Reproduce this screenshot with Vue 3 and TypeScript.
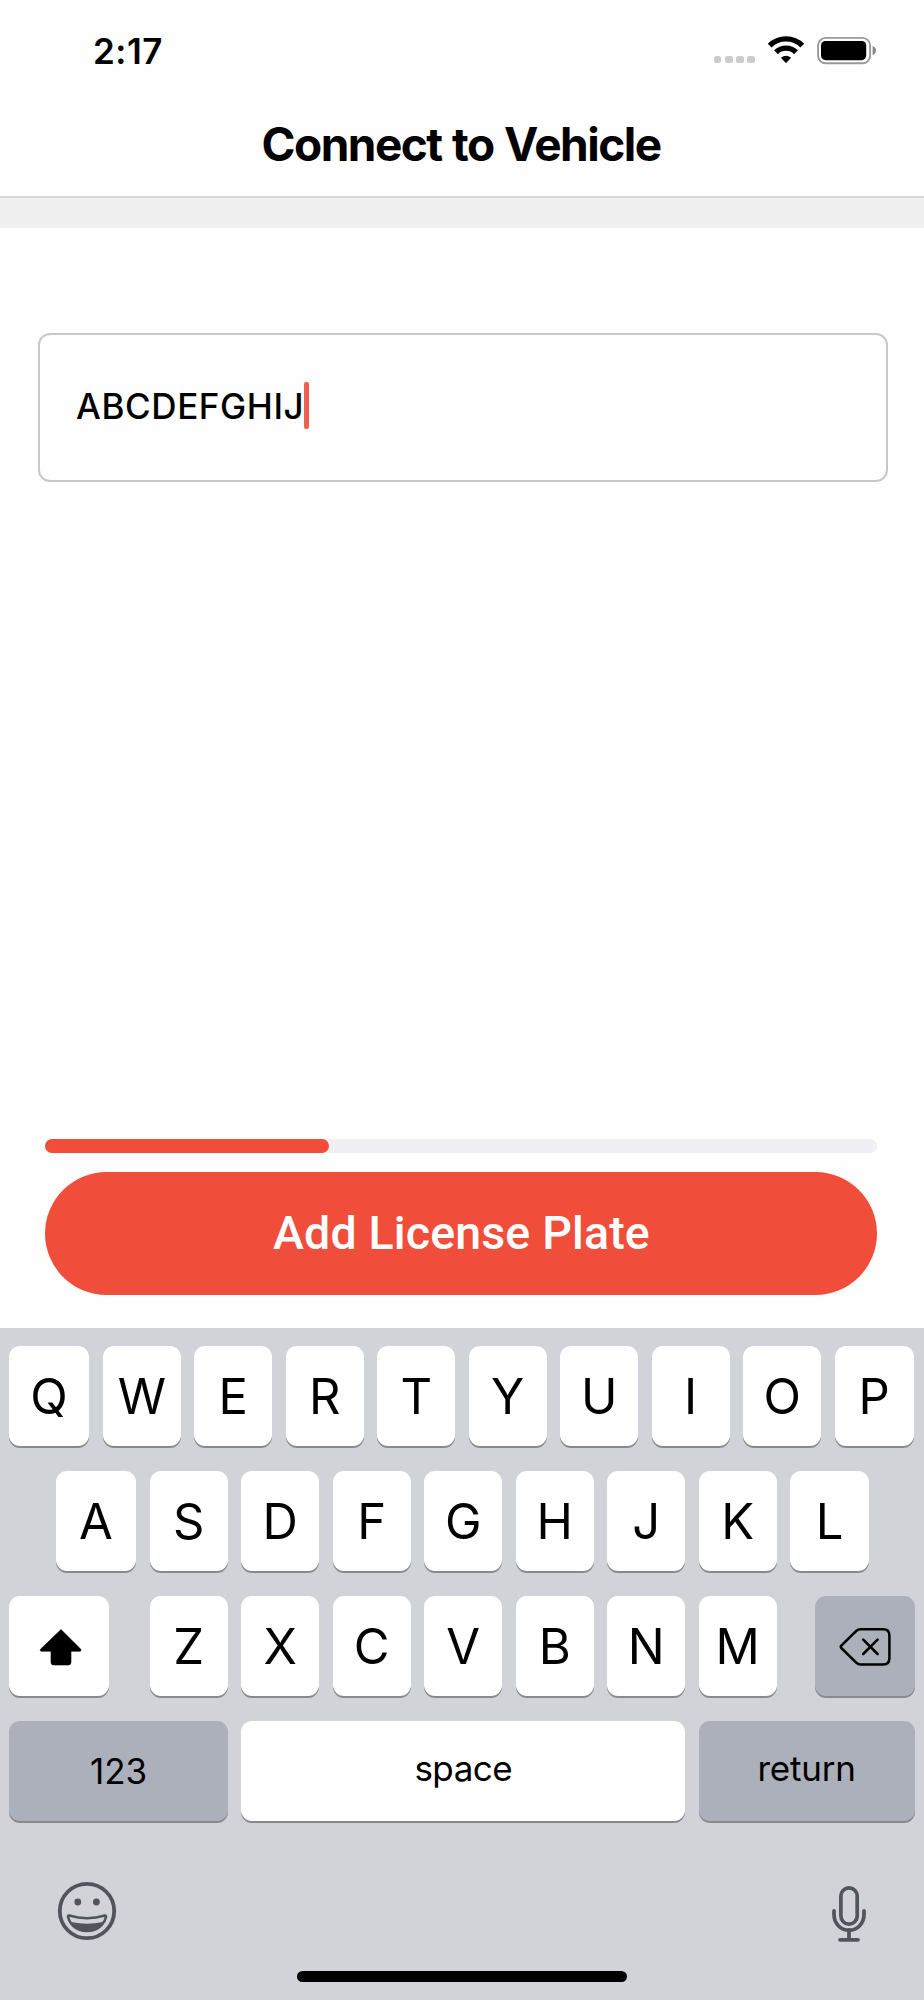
<script setup lang="ts">
import { ref } from 'vue'

const plate = ref<string>('ABCDEFGHIJ')
const progress = ref<number>(34.1)
const topRow: string[] = [...'QWERTYUIOP']
const homeRow: string[] = [...'ASDFGHJKL']
const bottomRow: string[] = [...'ZXCVBNM']
</script>

<template>
  <div class="screen">
    <header class="header">
      <div class="status">
        <span class="time">2:17</span>
        <div class="indicators">
          <div class="signal"><i v-for="n in 4" :key="n"></i></div>
          <svg class="wifi" width="38" height="28" viewBox="0 0 38 28">
            <path d="M2.7 9.6A23 23 0 0 1 35.3 9.6" fill="none" stroke="#000" stroke-width="5.4" />
            <path d="M9 16.2A14.4 14.4 0 0 1 29 16.2" fill="none" stroke="#000" stroke-width="5.4" />
            <path d="M13.9 21.7Q19 17.6 24.1 21.7L19.7 26.6Q19 27.3 18.3 26.6Z" fill="#000" />
          </svg>
          <svg class="battery" width="62" height="29" viewBox="0 0 62 29">
            <rect x="2.1" y="1.9" width="52" height="25.4" rx="7.6" fill="none" stroke="#999" stroke-width="1.9" />
            <rect x="5" y="5" width="45.2" height="19.2" rx="4.6" fill="#000" />
            <path d="M56.6 10Q60 11.4 60 14.6Q60 17.8 56.6 19.2Z" fill="#888" />
          </svg>
        </div>
      </div>
      <h1 class="title">Connect to Vehicle</h1>
    </header>
    <div class="band"></div>

    <main class="content">
      <div class="field">
        <span class="value">{{ plate }}</span><span class="caret"></span>
      </div>
      <div class="actions">
        <div class="track"><div class="fill" :style="{ width: progress + '%' }"></div></div>
        <button class="submit" type="button"><span>Add License Plate</span></button>
      </div>
    </main>

    <section class="keyboard">
      <div class="row">
        <div v-for="k in topRow" :key="k" class="key letter">{{ k }}</div>
      </div>
      <div class="row home-row">
        <div v-for="k in homeRow" :key="k" class="key letter">{{ k }}</div>
      </div>
      <div class="row">
        <div class="key shift">
          <svg width="44" height="38" viewBox="0 0 44 38">
            <path d="M22 1.6L41.8 21.2Q42.6 22.8 41.2 23.2H32V34.2Q32 37 29.2 37H14.8Q12 37 12 34.2V23.2H2.2Q.6 22.8 1.5 21.2Z" fill="#000" stroke="#000" stroke-width=".6" stroke-linejoin="round" />
          </svg>
        </div>
        <div class="letters">
          <div v-for="k in bottomRow" :key="k" class="key letter">{{ k }}</div>
        </div>
        <div class="key gray delete">
          <svg width="52" height="40" viewBox="0 0 52 40" fill="none" stroke="#000" stroke-width="2.5" stroke-linecap="round" stroke-linejoin="round">
            <path d="M21.5 2.2H44.2Q50.4 2.2 50.4 8.4V31.2Q50.4 37.4 44.2 37.4H21.5Q19 37.4 17.2 35.6L2.3 21Q1.1 19.8 2.3 18.6L17.2 4Q19 2.2 21.5 2.2Z" />
            <path d="M24.2 12.6L38.6 27M38.6 12.6L24.2 27" />
          </svg>
        </div>
      </div>
      <div class="row">
        <div class="key gray word numbers">123</div>
        <div class="key word space"><span>space</span></div>
        <div class="key gray word return"><span>return</span></div>
      </div>
      <div class="tools">
        <svg width="60" height="60" viewBox="0 0 60 60">
          <circle cx="30" cy="30" r="27.2" fill="none" stroke="#50555c" stroke-width="3.8" />
          <circle cx="20.8" cy="21" r="3.4" fill="#50555c" />
          <circle cx="39.4" cy="21" r="3.4" fill="#50555c" />
          <path d="M12.2 34.6Q30 39.8 47.8 34.6Q49.3 34.3 48.9 36C46.8 44.5 39.5 50 30 50C20.5 50 13.2 44.5 11.1 36Q10.7 34.3 12.2 34.6Z" fill="none" stroke="#50555c" stroke-width="2.6" />
          <path d="M14 41Q30 44.6 46 41C43.5 47 37.5 51 30 51C22.5 51 16.5 47 14 41Z" fill="#50555c" />
        </svg>
        <svg width="38" height="60" viewBox="0 0 38 60" fill="none" stroke="#50555c" stroke-width="3.7" stroke-linecap="round">
          <rect x="10.9" y="3.9" width="16.3" height="36.3" rx="8.15" />
          <path d="M4 26.9V30.6C4 39.5 10.5 46.2 19 46.2S34 39.5 34 30.6V26.9" />
          <path d="M19 46.2V55.8M10 55.8H28" />
        </svg>
      </div>
      <div class="home-bar"></div>
    </section>
  </div>
</template>

<style>
body {
  margin: 0;
  background: #fefefe;
}
</style>

<style scoped>
* {
  box-sizing: border-box;
}
.screen {
  width: 924px;
  height: 2000px;
  display: flex;
  flex-direction: column;
  overflow: hidden;
  background: #fefefe;
  color: #000;
  font-family: Inter, "Liberation Sans", sans-serif;
}
.header {
  height: 198px;
  border-bottom: 2px solid #d8d8d8;
}
.status {
  height: 102px;
  display: flex;
  align-items: flex-start;
  justify-content: space-between;
  padding: 30px 46px 0 93px;
}
.time {
  font-size: 35px;
  font-weight: 600;
  line-height: 42px;
  letter-spacing: 0.5px;
}
.indicators {
  display: flex;
  padding-top: 6px;
}
.signal {
  display: flex;
  gap: 3.4px;
  padding-top: 20px;
}
.signal i {
  width: 7.8px;
  height: 7.4px;
  border-radius: 2.5px;
  background: #ccc;
}
.wifi {
  margin-left: 12px;
}
.battery {
  margin-left: 11px;
}
.title {
  margin: 0;
  padding-right: 2px;
  text-align: center;
  font-size: 46px;
  font-weight: 700;
  line-height: 85px;
  letter-spacing: -1.5px;
  word-spacing: 1px;
}
.band {
  height: 30px;
  background: #f0f0f0;
}
.content {
  height: 1100px;
  display: flex;
  flex-direction: column;
  justify-content: space-between;
  padding: 105px 36px 33px 38px;
}
.field {
  height: 149px;
  display: flex;
  align-items: flex-start;
  padding: 47px 36px;
  border: 2px solid #c8c8c8;
  border-radius: 12px;
}
.value {
  width: 228px;
  font-size: 35px;
  font-weight: 550;
  line-height: 48px;
  letter-spacing: 0.6px;
  white-space: nowrap;
}
.caret {
  width: 5px;
  height: 47px;
  border-radius: 2px;
  background: #f06050;
}
.actions {
  padding: 0 11px 0 7px;
}
.track {
  height: 14px;
  margin-bottom: 19px;
  border-radius: 7px;
  background: #efeff4;
}
.fill {
  height: 14px;
  border-radius: 7px;
  background: #f04d3a;
}
.submit {
  display: block;
  width: 100%;
  height: 123px;
  padding: 0 0 0 1px;
  border: 0;
  border-radius: 62px;
  background: #f04d3a;
  color: #fff;
  font: 500 46.5px/123px Roboto, sans-serif;
  letter-spacing: 0.15px;
}
.keyboard {
  height: 672px;
  padding: 18px 9px 0;
  background: #d1d3d9;
}
.row {
  height: 100px;
  margin-bottom: 25px;
  display: flex;
  gap: 13.3px;
}
.home-row {
  padding-left: 47px;
}
.key {
  flex: none;
  height: 100px;
  display: flex;
  align-items: center;
  justify-content: center;
  border-radius: 11px;
  background: #fff;
  box-shadow: 0 2px 0 #88898d;
}
.letter {
  width: 78.2px;
  padding-top: 2px;
  font-size: 49px;
  line-height: 98px;
}
.row > .letter:first-child {
  width: 80px;
  margin-right: 0.4px;
}
.row > .letter:last-child {
  width: 79px;
}
.letters {
  display: flex;
  gap: 13.3px;
  margin: 0 24.8px 0 27.4px;
}
.shift {
  width: 100px;
  padding-left: 3px;
  padding-top: 2px;
}
.delete {
  width: 100px;
  padding-left: 1px;
  padding-top: 2px;
}
.gray {
  background: #acb0ba;
}
.word {
  font-size: 35px;
}
.numbers {
  width: 219px;
}
.space {
  width: 444px;
  letter-spacing: -0.5px;
}
.return {
  width: 216px;
  letter-spacing: -0.2px;
}
.space span,
.return span {
  margin-top: -7px;
}
.tools {
  height: 60px;
  margin-top: 60px;
  padding: 0 47px 0 48px;
  display: flex;
  justify-content: space-between;
}
.tools svg:last-child {
  margin-top: 3px;
}
.home-bar {
  width: 330px;
  height: 11px;
  margin: 30px auto 0;
  border-radius: 6px;
  background: #000;
}
</style>
